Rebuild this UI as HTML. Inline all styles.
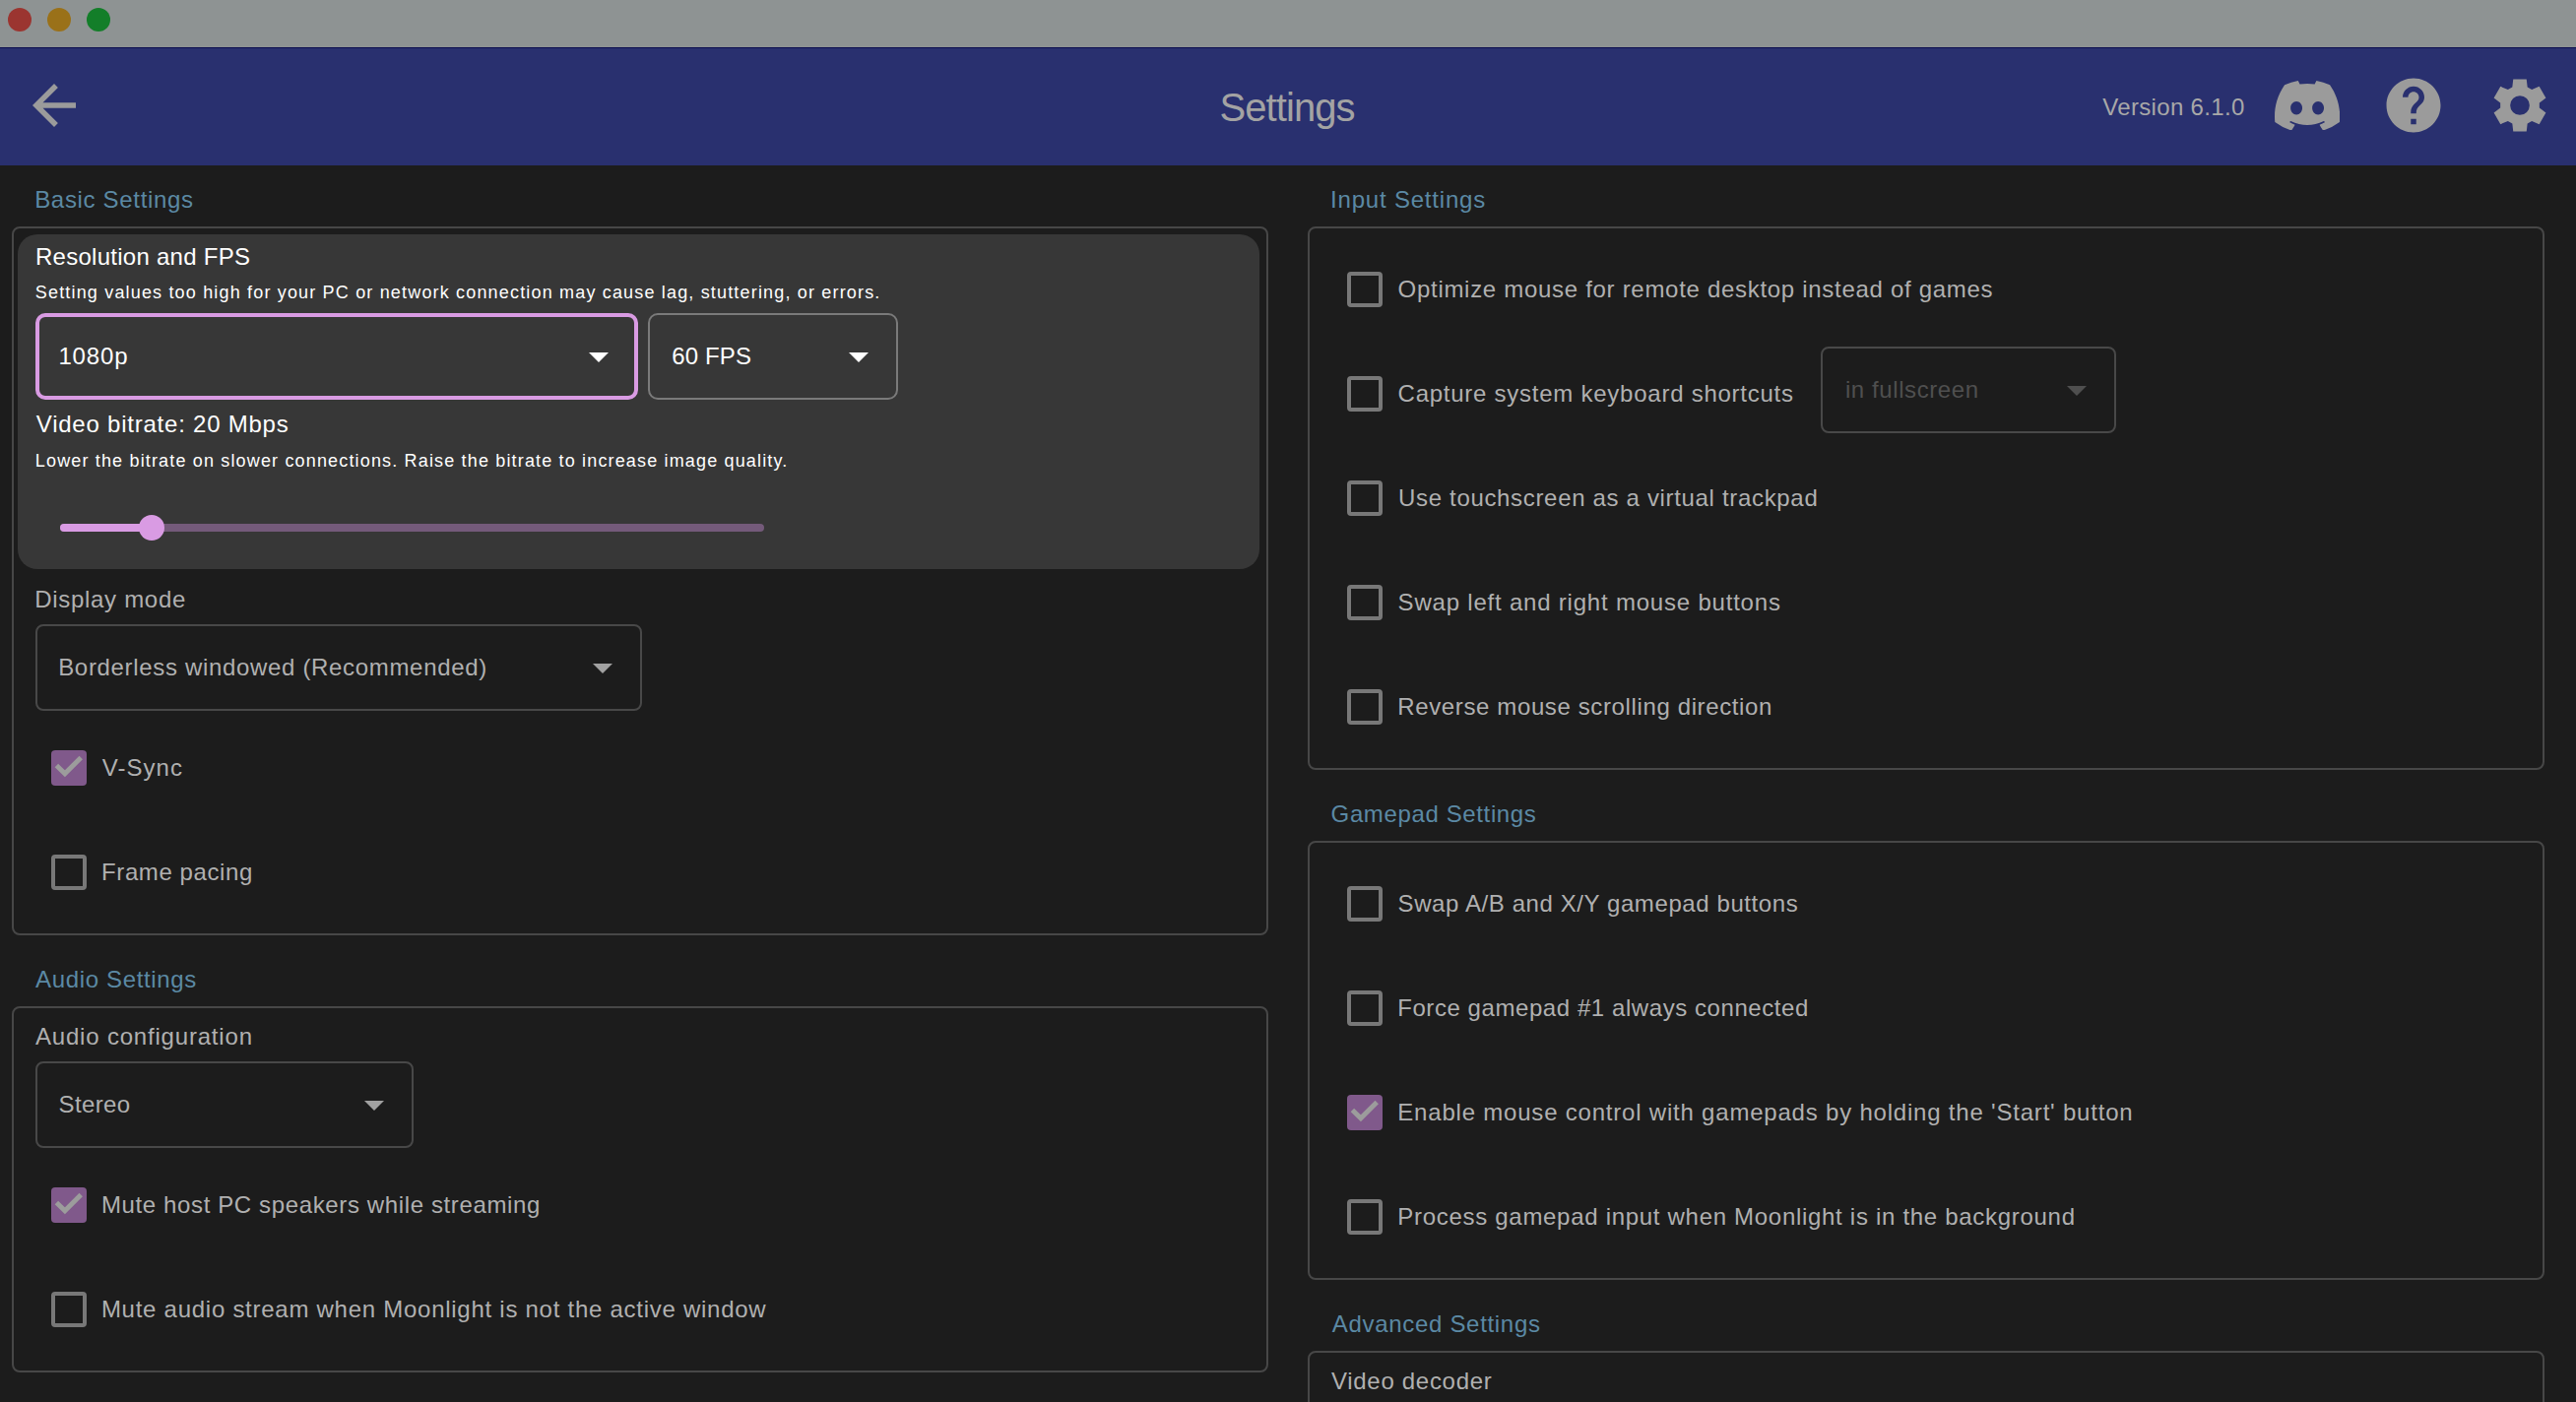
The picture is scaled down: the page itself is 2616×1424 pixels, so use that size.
<!DOCTYPE html>
<html><head><meta charset="utf-8"><title>Settings</title><style>
*{margin:0;padding:0;box-sizing:border-box}
html,body{width:2616px;height:1424px;overflow:hidden;background:#1c1c1c}
body{position:relative;font-family:"Liberation Sans",sans-serif}
.b{position:absolute;display:block}
.t{position:absolute;white-space:pre;line-height:1;font-family:"Liberation Sans",sans-serif}
</style></head><body>
<div class="b" style="left:0px;top:0px;width:2616px;height:48px;background:#8e9393;border-radius:0px;"></div>
<div class="b" style="left:0px;top:48px;width:2616px;height:1px;background:#0b0d4f;border-radius:0px;"></div>
<div class="b" style="left:0px;top:49px;width:2616px;height:119px;background:#29306f;border-radius:0px;"></div>
<div class="b" style="left:8px;top:8px;width:24px;height:24px;border-radius:50%;background:#9b3530"></div>
<div class="b" style="left:48px;top:8px;width:24px;height:24px;border-radius:50%;background:#9a7119"></div>
<div class="b" style="left:88px;top:8px;width:24px;height:24px;border-radius:50%;background:#137e29"></div>
<svg class="b" style="left:22px;top:74px" width="66" height="66" viewBox="0 0 24 24"><path fill="#9b9b9b" d="M20 11H7.83l5.59-5.59L12 4l-8 8 8 8 1.41-1.41L7.83 13H20v-2z"/></svg>
<svg class="b" style="left:2310px;top:81.7px" width="66.2" height="50.5" viewBox="0 0 127.14 96.36" preserveAspectRatio="none"><path fill="#9b9b9b" d="M107.7,8.07A105.15,105.15,0,0,0,81.47,0a72.06,72.06,0,0,0-3.36,6.83A97.68,97.68,0,0,0,49,6.83,72.37,72.37,0,0,0,45.64,0,105.89,105.89,0,0,0,19.39,8.09C2.79,32.65-1.710,56.6.54,80.21h0A105.73,105.73,0,0,0,32.71,96.36,77.7,77.7,0,0,0,39.6,85.25a68.42,68.42,0,0,1-10.85-5.18c.91-.66,1.8-1.34,2.66-2a75.57,75.57,0,0,0,64.32,0c.87.71,1.76,1.39,2.66,2a68.68,68.68,0,0,1-10.87,5.19,77,77,0,0,0,6.89,11.1A105.25,105.25,0,0,0,126.6,80.22h0C129.24,52.84,122.09,29.11,107.7,8.07ZM42.45,65.69C36.18,65.69,31,60,31,53s5-12.74,11.43-12.74S54,46,53.89,53,48.84,65.69,42.45,65.69Zm42.24,0C78.410,65.69,73.25,60,73.25,53s5-12.74,11.44-12.74S96.23,46,96.12,53,91.08,65.69,84.69,65.69Z"/></svg>
<svg class="b" style="left:2418px;top:74px" width="66" height="66" viewBox="0 0 24 24"><path fill="#9b9b9b" d="M12 2C6.48 2 2 6.48 2 12s4.48 10 10 10 10-4.48 10-10S17.52 2 12 2zm1 17h-2v-2h2v2zm2.07-7.750l-.9.92C13.45 12.9 13 13.5 13 15h-2v-.5c0-1.1.45-2.1 1.17-2.83l1.24-1.26c.37-.36.59-.86.59-1.41 0-1.1-.9-2-2-2s-2 .9-2 2H8c0-2.21 1.79-4 4-4s4 1.79 4 4c0 .88-.36 1.68-.93 2.25z"/></svg>
<svg class="b" style="left:0;top:0" width="2616" height="170"><path fill="#9b9b9b" fill-rule="evenodd" d="M2566.68 88.54 L2565.75 80.40 L2552.25 80.40 L2551.32 88.54 L2546.85 91.12 L2539.34 87.85 L2532.59 99.55 L2539.17 104.42 L2539.17 109.58 L2532.59 114.45 L2539.34 126.15 L2546.85 122.88 L2551.32 125.46 L2552.25 133.60 L2565.75 133.60 L2566.68 125.46 L2571.15 122.88 L2578.66 126.15 L2585.41 114.45 L2578.83 109.58 L2578.83 104.42 L2585.41 99.55 L2578.66 87.85 L2571.15 91.12 Z M2568.85 107 A9.85 9.85 0 1 0 2549.15 107 A9.85 9.85 0 1 0 2568.85 107 Z"/></svg>
<div class="b" style="left:12px;top:230px;width:1276px;height:720px;border:2px solid #474747;border-radius:8px;background:transparent"></div>
<div class="b" style="left:18px;top:238px;width:1261px;height:340px;background:#373737;border-radius:20px;"></div>
<div class="b" style="left:36px;top:318px;width:612px;height:88px;border:4px solid #d99be3;border-radius:10px;background:transparent"></div>
<svg class="b" style="left:598px;top:358px" width="20" height="10" viewBox="0 0 20 10"><path d="M0 0 L20 0 L10.0 10 Z" fill="#ffffff"/></svg>
<div class="b" style="left:658px;top:318px;width:254px;height:88px;border:2px solid #7a7a7a;border-radius:10px;background:transparent"></div>
<svg class="b" style="left:862px;top:358px" width="20" height="10" viewBox="0 0 20 10"><path d="M0 0 L20 0 L10.0 10 Z" fill="#ffffff"/></svg>
<div class="b" style="left:61px;top:532px;width:715px;height:8px;background:#745a7a;border-radius:4px;"></div>
<div class="b" style="left:61px;top:532px;width:99px;height:8px;background:#d99be3;border-radius:4px;"></div>
<div class="b" style="left:141.4px;top:523px;width:26px;height:26px;border-radius:50%;background:#d99be3"></div>
<div class="b" style="left:36px;top:634px;width:616px;height:88px;border:2px solid #484848;border-radius:8px;background:transparent"></div>
<svg class="b" style="left:602px;top:674px" width="20" height="10" viewBox="0 0 20 10"><path d="M0 0 L20 0 L10.0 10 Z" fill="#a1a1a1"/></svg>
<div class="b" style="left:52px;top:762px;width:36px;height:36px;background:#80598b;border-radius:4px"></div><svg class="b" style="left:52px;top:762px" width="36" height="36" viewBox="0 0 36 36"><path d="M5.4 15.6 L13.9 23.8 L30.2 7.6" fill="none" stroke="#9c9c9c" stroke-width="4.9"/></svg>
<div class="b" style="left:52px;top:868px;width:36px;height:36px;border:4px solid #787878;border-radius:4px"></div>
<div class="b" style="left:12px;top:1022px;width:1276px;height:372px;border:2px solid #474747;border-radius:8px;background:transparent"></div>
<div class="b" style="left:36px;top:1078px;width:384px;height:88px;border:2px solid #484848;border-radius:8px;background:transparent"></div>
<svg class="b" style="left:370px;top:1118px" width="20" height="10" viewBox="0 0 20 10"><path d="M0 0 L20 0 L10.0 10 Z" fill="#a1a1a1"/></svg>
<div class="b" style="left:52px;top:1206px;width:36px;height:36px;background:#80598b;border-radius:4px"></div><svg class="b" style="left:52px;top:1206px" width="36" height="36" viewBox="0 0 36 36"><path d="M5.4 15.6 L13.9 23.8 L30.2 7.6" fill="none" stroke="#9c9c9c" stroke-width="4.9"/></svg>
<div class="b" style="left:52px;top:1312px;width:36px;height:36px;border:4px solid #787878;border-radius:4px"></div>
<div class="b" style="left:1328px;top:230px;width:1256px;height:552px;border:2px solid #474747;border-radius:8px;background:transparent"></div>
<div class="b" style="left:1368px;top:276px;width:36px;height:36px;border:4px solid #787878;border-radius:4px"></div>
<div class="b" style="left:1368px;top:382px;width:36px;height:36px;border:4px solid #787878;border-radius:4px"></div>
<div class="b" style="left:1368px;top:488px;width:36px;height:36px;border:4px solid #787878;border-radius:4px"></div>
<div class="b" style="left:1368px;top:594px;width:36px;height:36px;border:4px solid #787878;border-radius:4px"></div>
<div class="b" style="left:1368px;top:700px;width:36px;height:36px;border:4px solid #787878;border-radius:4px"></div>
<div class="b" style="left:1849px;top:352px;width:300px;height:88px;border:2px solid #484848;border-radius:8px;background:transparent"></div>
<svg class="b" style="left:2099px;top:392px" width="20" height="10" viewBox="0 0 20 10"><path d="M0 0 L20 0 L10.0 10 Z" fill="#4f4f4f"/></svg>
<div class="b" style="left:1328px;top:854px;width:1256px;height:446px;border:2px solid #474747;border-radius:8px;background:transparent"></div>
<div class="b" style="left:1368px;top:900px;width:36px;height:36px;border:4px solid #787878;border-radius:4px"></div>
<div class="b" style="left:1368px;top:1006px;width:36px;height:36px;border:4px solid #787878;border-radius:4px"></div>
<div class="b" style="left:1368px;top:1112px;width:36px;height:36px;background:#80598b;border-radius:4px"></div><svg class="b" style="left:1368px;top:1112px" width="36" height="36" viewBox="0 0 36 36"><path d="M5.4 15.6 L13.9 23.8 L30.2 7.6" fill="none" stroke="#9c9c9c" stroke-width="4.9"/></svg>
<div class="b" style="left:1368px;top:1218px;width:36px;height:36px;border:4px solid #787878;border-radius:4px"></div>
<div class="b" style="left:1328px;top:1372px;width:1256px;height:128px;border:2px solid #474747;border-radius:8px;background:transparent"></div>
<div class="t" style="left:1238.4px;top:89px;font-size:40px;letter-spacing:-0.900px;color:#a3a3a3">Settings</div>
<div class="t" style="left:2135.2px;top:97px;font-size:24px;letter-spacing:0.333px;color:#a8a8a8">Version 6.1.0</div>
<div class="t" style="left:35.2px;top:191px;font-size:24px;letter-spacing:0.677px;color:#5b89a4">Basic Settings</div>
<div class="t" style="left:36.0px;top:249px;font-size:24px;letter-spacing:0.265px;color:#ffffff">Resolution and FPS</div>
<div class="t" style="left:35.8px;top:288px;font-size:18px;letter-spacing:1.172px;color:#ffffff">Setting values too high for your PC or network connection may cause lag, stuttering, or errors.</div>
<div class="t" style="left:59.4px;top:350px;font-size:24px;letter-spacing:0.875px;color:#ffffff">1080p</div>
<div class="t" style="left:682.2px;top:350px;font-size:24px;letter-spacing:0.160px;color:#ffffff">60 FPS</div>
<div class="t" style="left:36.8px;top:419px;font-size:24px;letter-spacing:0.771px;color:#ffffff">Video bitrate: 20 Mbps</div>
<div class="t" style="left:35.8px;top:459px;font-size:18px;letter-spacing:1.161px;color:#ffffff">Lower the bitrate on slower connections. Raise the bitrate to increase image quality.</div>
<div class="t" style="left:35.2px;top:597px;font-size:24px;letter-spacing:0.700px;color:#b0b0b0">Display mode</div>
<div class="t" style="left:59.2px;top:666px;font-size:24px;letter-spacing:0.672px;color:#b0b0b0">Borderless windowed (Recommended)</div>
<div class="t" style="left:103.7px;top:768px;font-size:24px;letter-spacing:1.060px;color:#b0b0b0">V-Sync</div>
<div class="t" style="left:103.1px;top:874px;font-size:24px;letter-spacing:0.582px;color:#b0b0b0">Frame pacing</div>
<div class="t" style="left:36.0px;top:983px;font-size:24px;letter-spacing:0.654px;color:#5b89a4">Audio Settings</div>
<div class="t" style="left:36.0px;top:1041px;font-size:24px;letter-spacing:0.806px;color:#b0b0b0">Audio configuration</div>
<div class="t" style="left:59.5px;top:1110px;font-size:24px;letter-spacing:0.400px;color:#b0b0b0">Stereo</div>
<div class="t" style="left:102.9px;top:1212px;font-size:24px;letter-spacing:0.628px;color:#b0b0b0">Mute host PC speakers while streaming</div>
<div class="t" style="left:102.9px;top:1318px;font-size:24px;letter-spacing:0.734px;color:#b0b0b0">Mute audio stream when Moonlight is not the active window</div>
<div class="t" style="left:1351.0px;top:191px;font-size:24px;letter-spacing:0.808px;color:#5b89a4">Input Settings</div>
<div class="t" style="left:1419.6px;top:282px;font-size:24px;letter-spacing:0.702px;color:#b0b0b0">Optimize mouse for remote desktop instead of games</div>
<div class="t" style="left:1419.6px;top:388px;font-size:24px;letter-spacing:0.747px;color:#b0b0b0">Capture system keyboard shortcuts</div>
<div class="t" style="left:1873.9px;top:384px;font-size:24px;letter-spacing:0.592px;color:#4f4f4f">in fullscreen</div>
<div class="t" style="left:1420.0px;top:494px;font-size:24px;letter-spacing:0.672px;color:#b0b0b0">Use touchscreen as a virtual trackpad</div>
<div class="t" style="left:1419.6px;top:600px;font-size:24px;letter-spacing:0.794px;color:#b0b0b0">Swap left and right mouse buttons</div>
<div class="t" style="left:1419.3px;top:706px;font-size:24px;letter-spacing:0.622px;color:#b0b0b0">Reverse mouse scrolling direction</div>
<div class="t" style="left:1351.6px;top:815px;font-size:24px;letter-spacing:0.627px;color:#5b89a4">Gamepad Settings</div>
<div class="t" style="left:1419.6px;top:906px;font-size:24px;letter-spacing:0.590px;color:#b0b0b0">Swap A/B and X/Y gamepad buttons</div>
<div class="t" style="left:1419.2px;top:1012px;font-size:24px;letter-spacing:0.570px;color:#b0b0b0">Force gamepad #1 always connected</div>
<div class="t" style="left:1419.3px;top:1118px;font-size:24px;letter-spacing:0.795px;color:#b0b0b0">Enable mouse control with gamepads by holding the 'Start' button</div>
<div class="t" style="left:1419.3px;top:1224px;font-size:24px;letter-spacing:0.702px;color:#b0b0b0">Process gamepad input when Moonlight is in the background</div>
<div class="t" style="left:1352.8px;top:1333px;font-size:24px;letter-spacing:0.688px;color:#5b89a4">Advanced Settings</div>
<div class="t" style="left:1352.0px;top:1391px;font-size:24px;letter-spacing:0.700px;color:#b0b0b0">Video decoder</div>
</body></html>
